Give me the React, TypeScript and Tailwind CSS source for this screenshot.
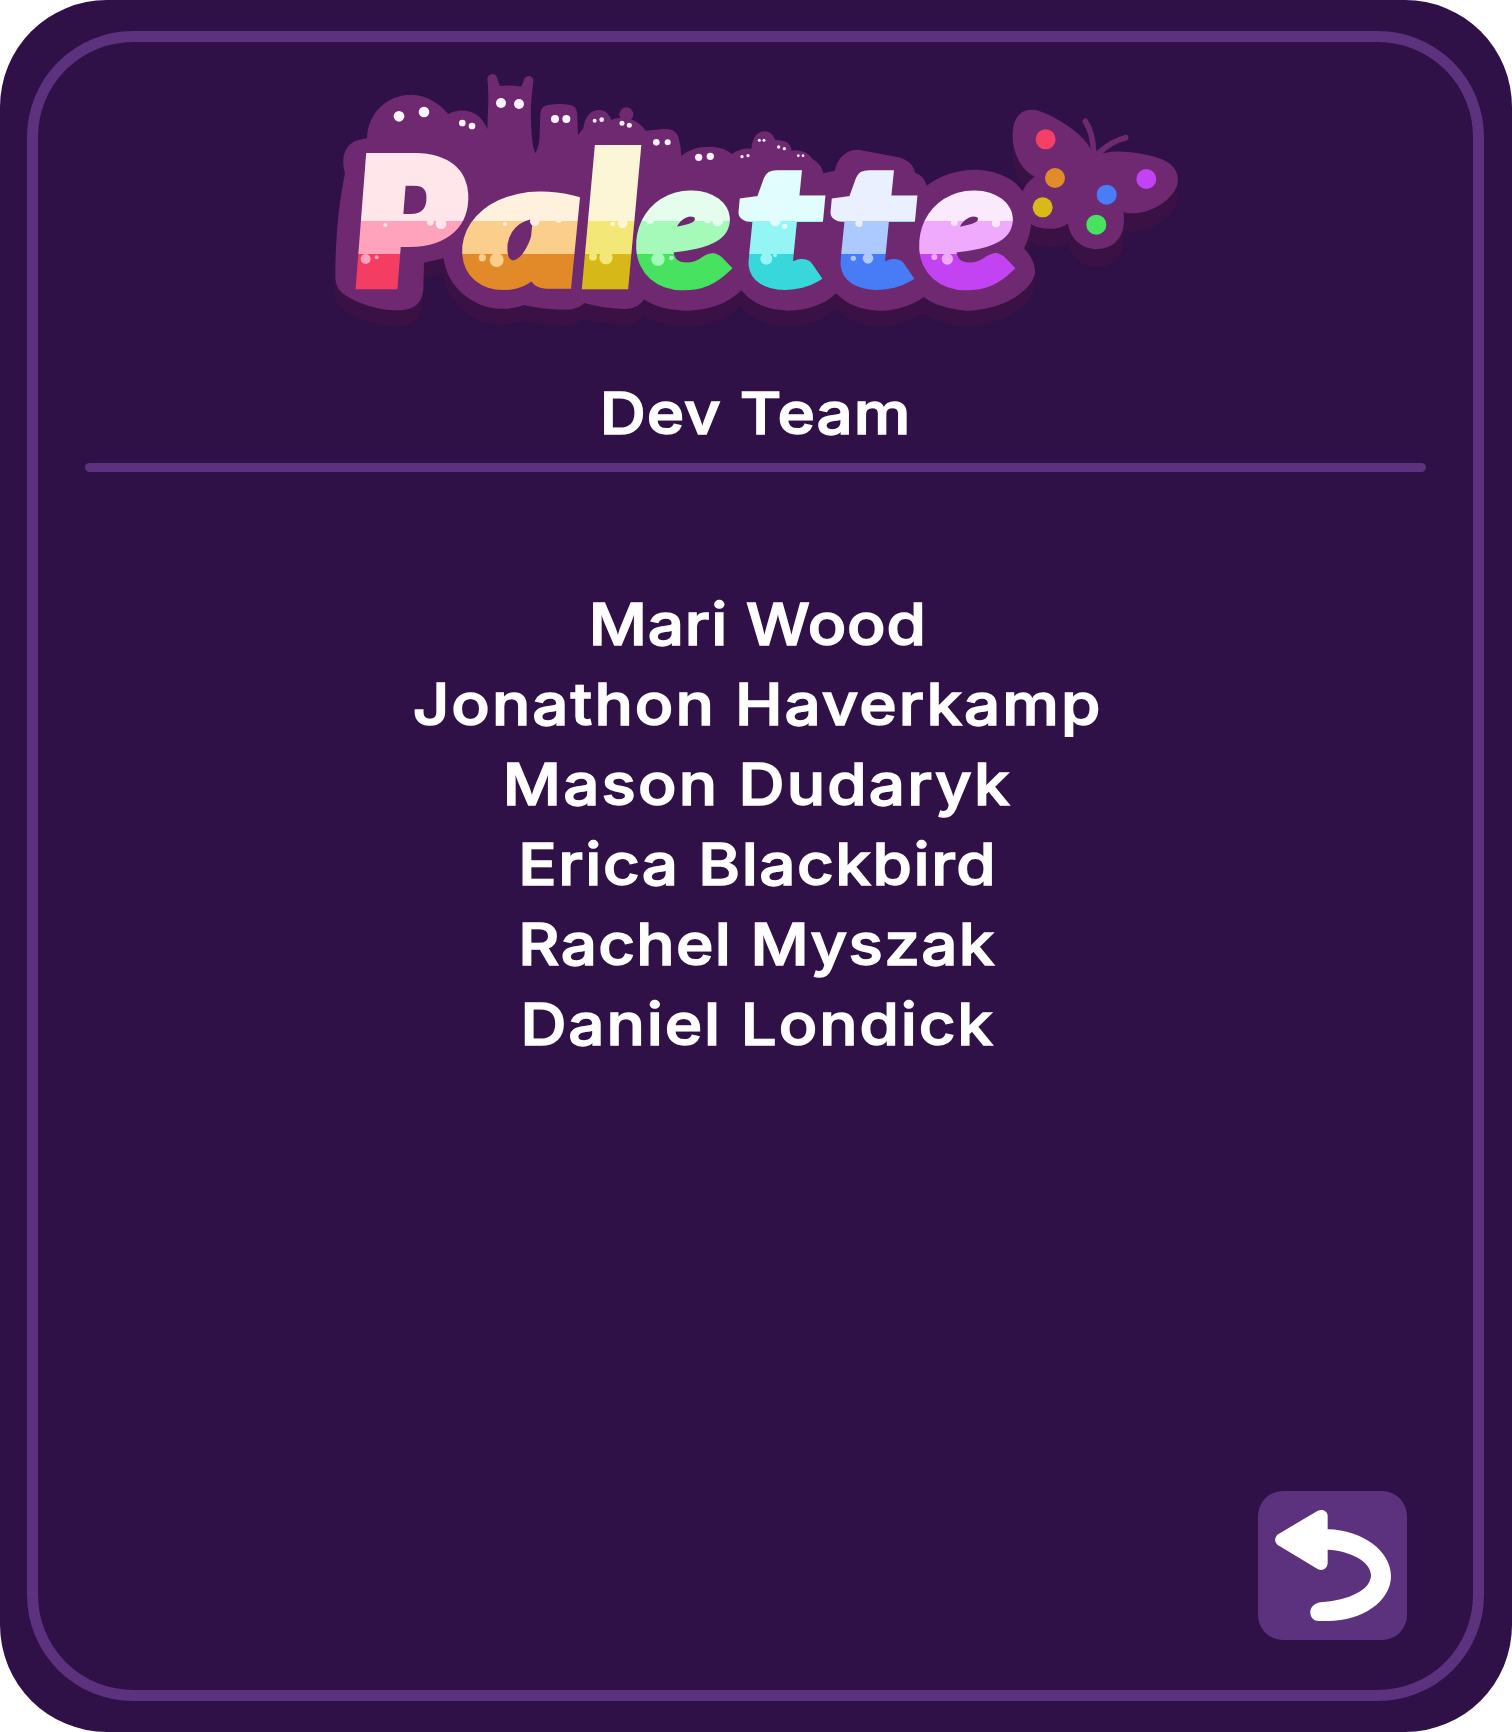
import React from 'react';

type Bubble = [number, number, number];

interface Letter {
  char: string;
  x: number;
  y: number;
  sx: number;
  sy: number;
  weight: number;
  colors: [string, string, string];
  light: Bubble[];
  mid: Bubble[];
}

const LETTERS: Letter[] = [
  { char: 'P', x: 357.8, y: 282.4, sx: 0.91, sy: 0.84, weight: 17, colors: ['#ffe6ea', '#ffa2bb', '#f43d62'], light: [[196, 495, 6], [331, 487, 10], [363, 491, 16]], mid: [[137, 597, 15], [170, 592, 6]] },
  { char: 'a', x: 468.8, y: 282.5, sx: 1.092, sy: 0.818, weight: 14, colors: ['#fff1de', '#fbce8b', '#e2892a'], light: [[555, 492, 6], [644, 484, 14], [716, 478, 10]], mid: [[487, 593, 11], [530, 600, 21]] },
  { char: 'l', x: 586.5, y: 282.8, sx: 1.124, sy: 0.884, weight: 14, colors: ['#fcf6d6', '#f3e778', '#d6b918'], light: [[878, 492, 7], [908, 490, 14]], mid: [[819, 590, 12], [858, 593, 20]] },
  { char: 'e', x: 640.5, y: 284.1, sx: 0.945, sy: 0.847, weight: 12, colors: ['#e4fdec', '#a5fab9', '#47e260'], light: [[990, 480, 12], [1163, 478, 12], [1193, 483, 16]], mid: [[1014, 598, 20], [1054, 594, 7]] },
  { char: 't', x: 744.3, y: 282.8, sx: 1.08, sy: 0.8, weight: 14, colors: ['#e1fdfe', '#94f5f5', '#37d7dc'], light: [[1366, 483, 16], [1394, 499, 8]], mid: [[1339, 596, 18], [1365, 586, 6]] },
  { char: 't', x: 836.3, y: 282.8, sx: 1.08, sy: 0.8, weight: 14, colors: ['#eaf0ff', '#accaff', '#487cf6'], light: [[1617, 490, 11]], mid: [[1600, 595, 8], [1644, 595, 16]] },
  { char: 'e', x: 923.5, y: 284.1, sx: 0.945, sy: 0.847, weight: 12, colors: ['#fbe9fe', '#efa9fd', '#c342f1'], light: [[1903, 488, 10], [2028, 490, 12]], mid: [[1843, 591, 9], [1882, 597, 17]] },
];

const EYES: Bubble[] = [
  [237, 169, 16], [312, 156, 16], [427, 189, 10], [456, 198, 10], [543, 129, 15], [597, 132, 15],
  [705, 177, 12], [739, 177, 12], [824, 182, 6], [845, 179, 7], [906, 190, 7.5], [928, 196, 7.5],
  [1009, 247, 10], [1043, 247, 9], [1136, 292, 11], [1171, 289, 11], [1266, 290, 5], [1284, 287, 5],
  [1318, 241, 4.5], [1332, 241, 4.5], [1376, 261, 5], [1393, 266, 5], [1435, 287, 4], [1449, 287, 4],
];

const WING_DOTS: [number, number, string][] = [
  [197, 148, '#f43f66'], [225, 264, '#e28b2a'], [188, 352, '#d7ba18'],
  [380, 314, '#487df6'], [349, 404, '#47e260'], [499, 267, '#c342f1'],
];

// Soft blob behind the word, with the row of little creatures along its top edge.
const BLOB =
  'M75 340C67 310 69 290 75 275C90 245 108 240 141 235C143 160 200 104 275 104C320 106 360 130 384 162C420 143 478 145 502 208L504 150C507 110 504 80 502 56C504 38 526 38 530 50L540 78Q572 74 604 80L613 56C620 42 640 48 640 62C636 100 632 130 633 175C634 230 638 262 646 280C655 262 659 245 659 225L661 160C664 140 672 136 690 134Q720 129 750 135C766 138 771 148 772 165L774 225L790 205C794 170 812 150 838 150C855 150 868 162 874 180Q886 174 898 174C930 172 960 185 977 212L1020 208C1050 205 1070 210 1076 235Q1083 260 1084 288C1120 255 1200 250 1235 282Q1265 262 1294 266C1298 225 1318 213 1335 214C1352 214 1362 230 1366 240C1390 240 1412 245 1415 272C1440 268 1465 278 1475 295C1495 308 1507 322 1510 340L1545 332C1550 300 1575 268 1615 269L1735 292C1765 300 1780 315 1785 338C1805 345 1815 358 1820 377C1870 340 1930 326 1980 330C2040 335 2085 360 2107 392C2130 420 2135 440 2135 475C2133 510 2125 540 2112 565C2135 590 2145 610 2145 640C2140 665 2120 690 2085 712C2040 740 1980 753 1940 752C1890 748 1840 735 1811 711C1780 735 1730 752 1680 752C1630 750 1585 738 1548 700C1515 735 1455 752 1405 752C1350 750 1300 735 1264 691C1225 730 1170 750 1105 752C1050 752 1000 740 973 718C960 735 945 748 910 747Q850 745 793 729C775 745 760 749 730 749Q660 747 612 735C570 752 510 750 470 728C410 700 378 650 371 595L312 608L310 690C305 730 285 745 250 750C190 755 120 735 75 705C52 690 46 670 46 645C46 540 56 430 75 340Z';

const WINGS =
  'M128 303C135 285 150 270 165 260C120 240 95 180 98 130C100 80 125 55 165 60C200 65 310 125 332 178L347 190L370 190C420 175 520 195 555 212C590 230 600 260 590 290C565 345 490 380 430 367C440 430 410 477 350 477C305 477 270 445 264 401C230 425 175 418 153 402L128 400Z';

function Butterfly({ color }: { color: string }) {
  return (
    <g fill={color}>
      <path d={WINGS} />
      <path d="M316 94Q340 130 341 190M437 143Q395 153 355 190" fill="none" stroke={color} strokeWidth="17" strokeLinecap="round" />
    </g>
  );
}

function Logo() {
  return (
    <svg className="mt-[18px] h-[280px] w-[880px] shrink-0" viewBox="316 60 880 280" role="img" aria-label="Palette">
      <defs>
        {LETTERS.map((l, i) => (
          <linearGradient key={i} id={`fill-${i}`} gradientUnits="userSpaceOnUse" x1="0" x2="0" y1={(144 - l.y) / l.sy} y2={(290 - l.y) / l.sy}>
            <stop offset="0.524" stopColor={l.colors[0]} />
            <stop offset="0.524" stopColor={l.colors[1]} />
            <stop offset="0.7555" stopColor={l.colors[1]} />
            <stop offset="0.7555" stopColor={l.colors[2]} />
          </linearGradient>
        ))}
      </defs>
      <g transform="translate(320 60) scale(0.33333)">
        <path d={BLOB} fill="#3a1145" transform="translate(-3 47)" />
        <g transform="translate(1980 145)"><Butterfly color="#3a1145" /></g>
        <path d={BLOB} fill="#6f2970" />
        <circle cx="919" cy="163" r="21" fill="#6f2970" />
        <g transform="translate(1980 90)">
          <Butterfly color="#6f2970" />
          {WING_DOTS.map(([x, y, c]) => <circle key={c} cx={x} cy={y} r="30" fill={c} />)}
        </g>
        {EYES.map(([x, y, r], i) => <circle key={i} cx={x} cy={y} r={r} fill="#fdf3ff" />)}
      </g>
      {LETTERS.map((l, i) => (
        <text
          key={i}
          transform={`matrix(${l.sx} 0 ${0.05 * l.sx} ${l.sy} ${l.x} ${l.y})`}
          className="font-['Lato',sans-serif] text-[200px] font-black italic"
          fill={`url(#fill-${i})`}
          stroke={`url(#fill-${i})`}
          strokeWidth={l.weight}
          strokeLinejoin="miter"
          strokeMiterlimit="2"
        >
          {l.char}
        </text>
      ))}
      <g transform="translate(320 60) scale(0.33333)">
        {LETTERS.map((l, i) => (
          <g key={i}>
            {l.light.map(([x, y, r], j) => <circle key={j} cx={x} cy={y} r={r} fill={l.colors[0]} />)}
            {l.mid.map(([x, y, r], j) => <circle key={j} cx={x} cy={y} r={r} fill={l.colors[1]} />)}
          </g>
        ))}
      </g>
    </svg>
  );
}

const TEAM = [
  { name: 'Mari Wood', tracking: 'tracking-[0.8px]' },
  { name: 'Jonathon Haverkamp', tracking: 'tracking-[1.85px]' },
  { name: 'Mason Dudaryk', tracking: 'tracking-[1.95px]' },
  { name: 'Erica Blackbird', tracking: 'tracking-[1.4px]' },
  { name: 'Rachel Myszak', tracking: 'tracking-[1.2px]' },
  { name: 'Daniel Londick', tracking: 'tracking-[1.7px]' },
];

const LINE =
  "scale-x-110 whitespace-nowrap font-['Inter',sans-serif] text-[58px] font-medium leading-[80px] text-white [-webkit-text-stroke:1.5px_white] [stroke-linejoin:round]";

export default function App() {
  return (
    <div className="h-[1732px] w-full bg-white">
      <main className="flex h-full rounded-[107px] bg-[#2f1147] pt-[31px] pr-[28px] pb-[31px] pl-[27px]">
        <section className="flex flex-1 flex-col items-center rounded-[106px] border-[11px] border-[#5c327f]">
          <Logo />
          <h1 className={`${LINE} mt-[33px] tracking-[0.9px]`}>Dev Team</h1>
          <div className="mt-[10px] h-[9px] w-[1341px] rounded-full bg-[#5c327f]" />
          <ul className="mt-[112px] flex flex-col items-center pl-[4px]">
            {TEAM.map((m) => (
              <li key={m.name} className={`${LINE} ${m.tracking}`}>{m.name}</li>
            ))}
          </ul>
          <button className="mt-auto mr-[66px] mb-[50px] size-[149px] self-end rounded-[25px] bg-[#5c327f]" aria-label="Back">
            <svg viewBox="54 33 447 447" className="size-full" fill="#fff">
              <path d="M112 164L232 93C248 85 263 94 263 108L263 148C370 150 453 215 453 288C453 365 365 423 265 423L235 423C204 420 200 375 240 367C330 362 393 328 393 286C393 245 330 212 263 209L263 250C261 268 247 273 234 268L112 194Q98 180 112 164Z" />
            </svg>
          </button>
        </section>
      </main>
    </div>
  );
}
